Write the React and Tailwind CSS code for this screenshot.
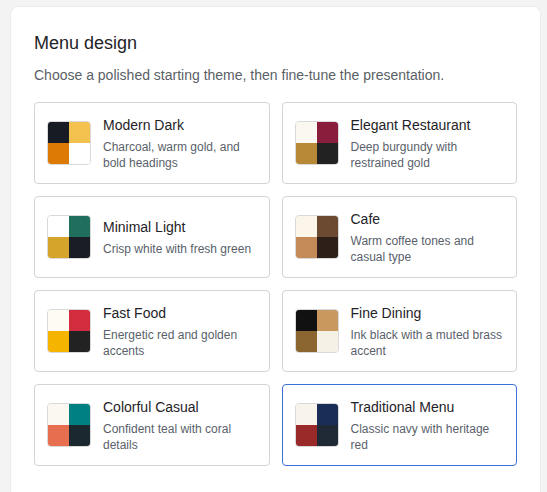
import React from "react";

const themes = [
  { name: "Modern Dark", desc: "Charcoal, warm gold, and bold headings", c: ["#171b24", "#f2c14e", "#dd7a06", "#ffffff"] },
  { name: "Elegant Restaurant", desc: "Deep burgundy with restrained gold", c: ["#fbf8f2", "#8a1c3c", "#b88a38", "#222222"] },
  { name: "Minimal Light", desc: "Crisp white with fresh green", c: ["#ffffff", "#1f6f5c", "#d4a52a", "#1a1d23"] },
  { name: "Cafe", desc: "Warm coffee tones and casual type", c: ["#fbf5ea", "#6b4a31", "#c48a58", "#2e2018"] },
  { name: "Fast Food", desc: "Energetic red and golden accents", c: ["#fefbf5", "#d22c3e", "#f4b400", "#222222"] },
  { name: "Fine Dining", desc: "Ink black with a muted brass accent", c: ["#111111", "#c9985e", "#8b6630", "#f6f1e6"] },
  { name: "Colorful Casual", desc: "Confident teal with coral details", c: ["#fbf8f2", "#008080", "#e86e50", "#1b2830"] },
  { name: "Traditional Menu", desc: "Classic navy with heritage red", c: ["#f8f4ec", "#1a2d57", "#9a2a2a", "#1f2a36"], selected: true },
];

function Swatch({ c }) {
  return (
    <div className="grid h-[44px] w-[44px] shrink-0 grid-cols-2 grid-rows-2 overflow-hidden rounded-[4px] border border-[#d9d9d9]">
      {c.map((col, i) => (
        <div key={i} style={{ backgroundColor: col }} />
      ))}
    </div>
  );
}

export default function App() {
  return (
    <div className="min-h-[492px] bg-[#f3f3f3] pl-[10px] pr-[6px] pt-[6px]" style={{ fontFamily: '"Liberation Sans", Arial, sans-serif' }}>
      <div className="min-h-[486px] rounded-t-[8px] border border-b-0 border-[#ececec] bg-white px-[23px] pt-[23px]">
        <h1 className="text-[18px] leading-[27px] text-[#1f2328]">Menu design</h1>
        <p className="mt-[8px] text-[14px] leading-[21px] text-[#5a5f66]">
          Choose a polished starting theme, then fine-tune the presentation.
        </p>
        <div className="mt-[16px] grid grid-cols-2 gap-[12px]">
          {themes.map((t) => (
            <div
              key={t.name}
              className={`flex h-[82px] items-center gap-[12px] rounded-[4px] border bg-white pl-[12px] pr-[8px] ${
                t.selected ? "border-[#3d6fd9]" : "border-[#d4d4d4]"
              }`}
            >
              <Swatch c={t.c} />
              <div className="min-w-0">
                <div className="text-[14px] leading-[20px] text-[#1f2328]">{t.name}</div>
                <div className="mt-[4px] text-[12px] leading-[16px] text-[#5a5f6b]">{t.desc}</div>
              </div>
            </div>
          ))}
        </div>
      </div>
    </div>
  );
}
